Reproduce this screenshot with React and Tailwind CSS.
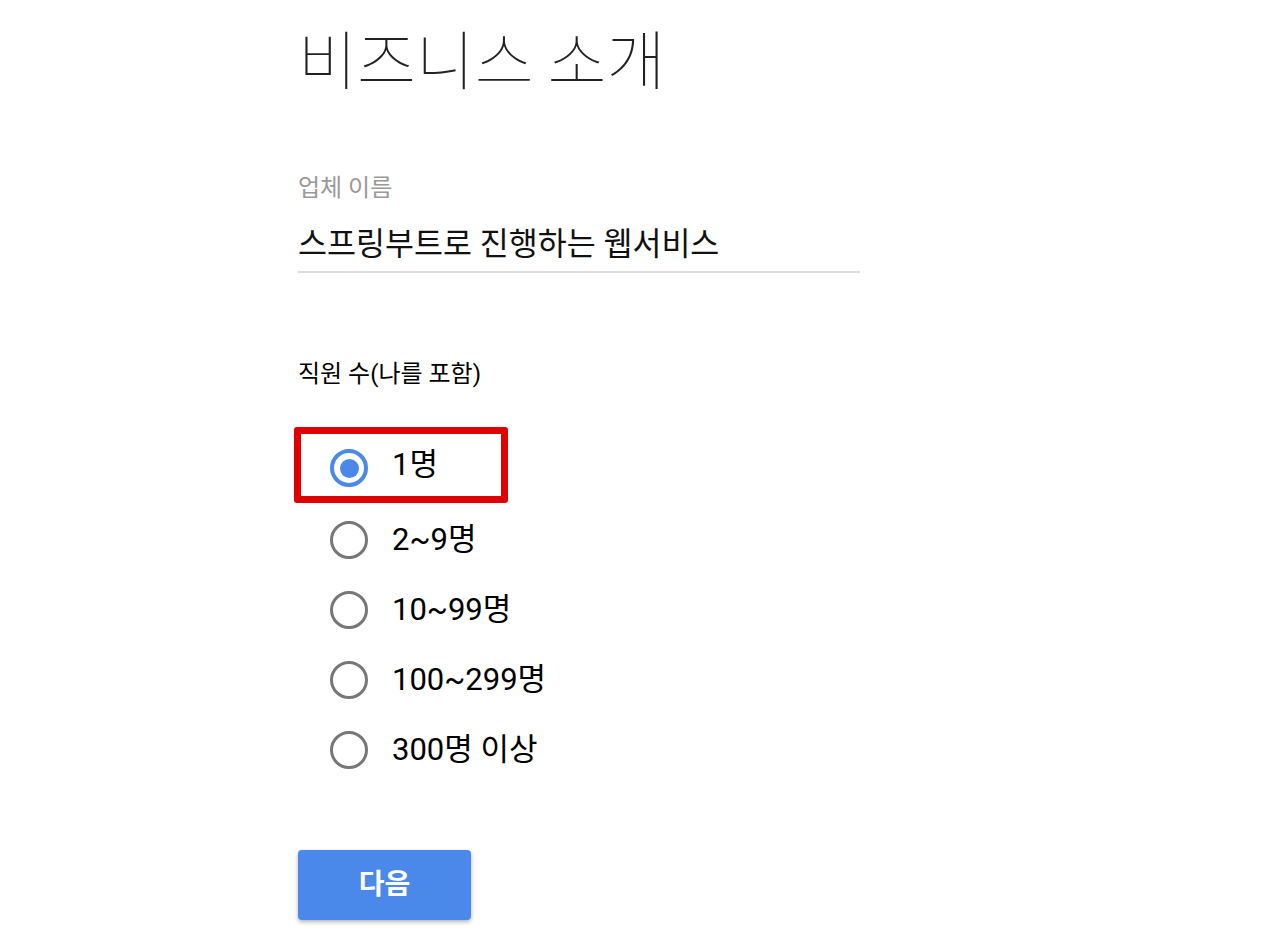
import React from "react";

const options = ["1명", "2~9명", "10~99명", "100~299명", "300명 이상"];

function Radio({ checked }) {
  return checked ? (
    <span className="mt-[6px] flex h-[38px] w-[38px] items-center justify-center rounded-full border-[4px] border-[#4a89ea]">
      <span className="h-[19px] w-[19px] rounded-full bg-[#4a89ea]" />
    </span>
  ) : (
    <span className="h-[38px] w-[38px] rounded-full border-[3px] border-[#777777]" />
  );
}

export default function App() {
  return (
    <div className="min-h-[952px] bg-white font-['Roboto','Noto_Sans_CJK_KR',sans-serif] text-black">
      <div className="flex flex-col pl-[298px]">
        <h1 className="mt-[18px] h-[76px] font-['Noto_Sans_CJK_KR',sans-serif] text-[64px] font-thin leading-[76px] text-[#222]">
          비즈니스 소개
        </h1>

        <div className="mt-[79px] text-[24px] leading-[30px] text-[#999999]">업체 이름</div>
        <div className="mt-[22px] w-[562px] border-b-2 border-[#dddddd] pb-[6px] text-[31.5px] leading-[40px] text-[#111]">
          스프링부트로 진행하는 웹서비스
        </div>

        <div className="mt-[86px] text-[24px] leading-[30px]">직원 수(나를 포함)</div>

        <div className="mt-[38px] flex flex-col">
          <div className="-ml-[4px] flex h-[76px] w-[214px] items-center gap-[24px] rounded-[3px] border-[7px] border-[#e00000] pl-[29px]">
            <Radio checked />
            <span className="text-[31px] leading-[36px]">{options[0]}</span>
          </div>
          <div className="flex flex-col pt-[2px]">
            {options.slice(1).map((o) => (
              <div key={o} className="flex h-[70px] items-center gap-[24px] pl-[32px]">
                <Radio />
                <span className="text-[31px] leading-[36px]">{o}</span>
              </div>
            ))}
          </div>
        </div>

        <button className="mt-[65px] h-[70px] w-[173px] rounded-[4px] bg-[#4a89ea] text-[28px] font-bold text-white shadow-[0_2px_4px_rgba(0,0,0,0.3)]">
          다음
        </button>
      </div>
    </div>
  );
}
